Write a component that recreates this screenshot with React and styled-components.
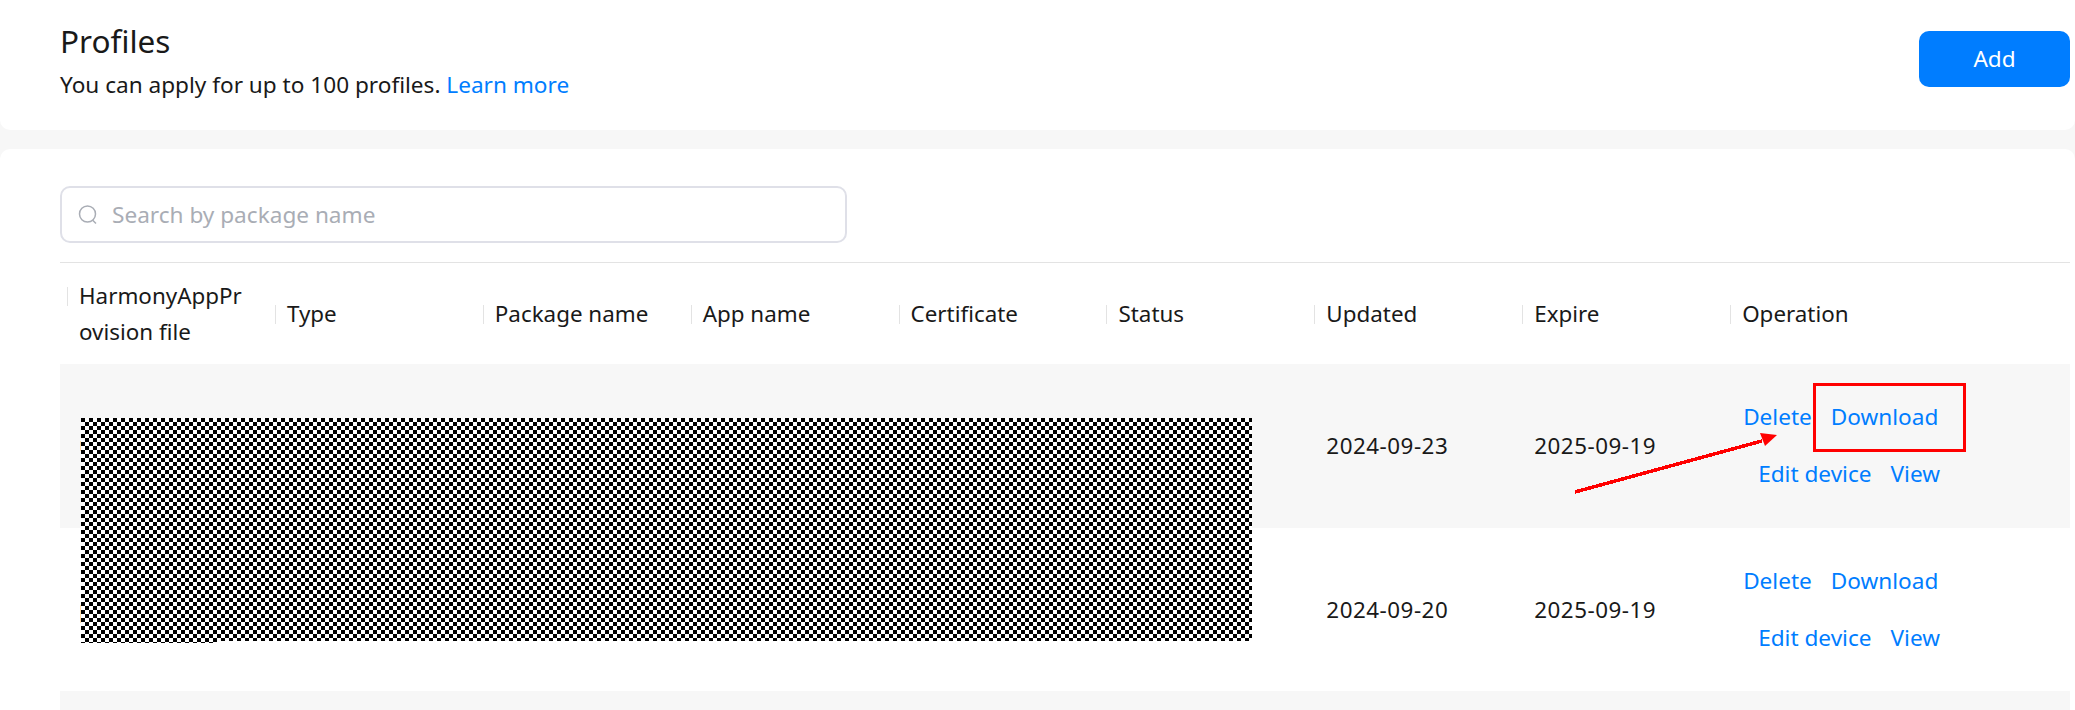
import React from 'react';
import styled, { createGlobalStyle } from 'styled-components';

const GlobalStyle = createGlobalStyle`
  html, body {
    margin: 0;
    padding: 0;
    background: #f7f7f7;
  }
  body {
    width: 2075px;
    height: 710px;
    overflow: hidden;
    font-family: "Noto Sans", "Liberation Sans", sans-serif;
    color: #191919;
  }
`;

const Page = styled.div`
  position: relative;
  width: 2075px;
  height: 710px;
  overflow: hidden;
`;

const HeaderCard = styled.header`
  height: 130px;
  box-sizing: border-box;
  padding: 0 5px 0 60px;
  background: #fff;
  border-radius: 0 0 10px 10px;
  display: flex;
  justify-content: space-between;
  align-items: flex-start;
`;

const Title = styled.h1`
  margin: 21px 0 0;
  font-size: 31.5px;
  line-height: 40px;
  font-weight: 400;
`;

const Subtitle = styled.p`
  margin: 6px 0 0;
  font-size: 22.6px;
  line-height: 36px;
`;

const Link = styled.a`
  color: #007dff;
  text-decoration: none;
`;

const AddButton = styled.button`
  width: 151px;
  height: 56px;
  margin-top: 31px;
  padding: 0 0 2px;
  border: none;
  border-radius: 10px;
  background: #007dff;
  color: #fff;
  font: inherit;
  font-size: 22.6px;
`;

const TableCard = styled.section`
  margin-top: 19px;
  height: 561px;
  padding: 37px 5px 0 60px;
  box-sizing: border-box;
  background: #fff;
  border-radius: 10px 10px 0 0;
`;

const SearchBox = styled.div`
  width: 787px;
  height: 57px;
  box-sizing: border-box;
  border: 2px solid #dfe0e8;
  border-radius: 10px;
  display: flex;
  align-items: center;
  gap: 14px;
  padding-left: 16px;
  color: #a9adb5;
  font-size: 22.6px;
`;

const Divider = styled.div`
  height: 1px;
  margin-top: 19px;
  background: #e3e3e3;
`;

const Grid = styled.div`
  display: grid;
  grid-template-columns: repeat(8, 207.9px) 1fr;
  align-items: center;
  height: ${(p) => p.$height}px;
  background: ${(p) => (p.$shade ? '#f7f7f7' : 'transparent')};
`;

const HeadCell = styled.div`
  position: relative;
  padding: 0 22px 0 19px;
  font-size: 22.4px;
  line-height: 36px;
  word-break: break-all;
  &::before {
    content: '';
    position: absolute;
    left: 7px;
    top: 9px;
    height: 19px;
    width: 1px;
    background: #e3e3e3;
  }
`;

const Cell = styled.div`
  padding-left: 19px;
  font-size: 22.4px;
  letter-spacing: 0.5px;
  grid-column: ${(p) => p.$col};
`;

const OpCell = styled.div`
  grid-column: 9;
  display: flex;
  flex-direction: column;
  gap: 21px;
  padding-left: 20px;
  font-size: 22.6px;
  line-height: 36px;
`;

const OpRow = styled.div`
  display: flex;
  gap: 19px;
  padding-left: ${(p) => p.$indent}px;
`;

const Tail = styled.div`
  height: 19px;
  background: #f7f7f7;
`;

// the reference has this part blacked out with a fine checker pattern,
// its lower right edge sits 2px higher than the left bit
const Redaction = styled.div`
  position: absolute;
  left: 81px;
  top: 418px;
  width: 1171px;
  height: 225px;
  background: repeating-conic-gradient(#000 0 25%, #fff 0 50%) 4px 0 / 8px 8px;
  clip-path: polygon(0 0, 100% 0, 100% 223px, 136px 223px, 136px 100%, 0 100%);
`;

// orange edge of the link text that sticks out left of the redaction
const LinkEdge = styled.div`
  position: absolute;
  left: 80px;
  top: ${(p) => p.$top}px;
  width: 1px;
  height: ${(p) => p.$height}px;
  background: #fcd9a6;
`;

const Annotations = styled.svg`
  position: absolute;
  inset: 0;
  pointer-events: none;
`;

const SearchIcon = () => (
  <svg width="20" height="20" viewBox="0 0 20 20" fill="none" stroke="#a9adb5" strokeWidth="1.5">
    <circle cx="9.5" cy="9" r="8" />
    <path d="M14.5 15 L18 18.5" />
  </svg>
);

const columns = ['HarmonyAppProvision file', 'Type', 'Package name', 'App name', 'Certificate', 'Status', 'Updated', 'Expire', 'Operation'];

const rows = [
  { updated: '2024-09-23', expire: '2025-09-19', shade: true },
  { updated: '2024-09-20', expire: '2025-09-19', shade: false },
];

export default function App() {
  return (
    <Page>
      <GlobalStyle />
      <HeaderCard>
        <div>
          <Title>Profiles</Title>
          <Subtitle>You can apply for up to 100 profiles. <Link>Learn more</Link></Subtitle>
        </div>
        <AddButton>Add</AddButton>
      </HeaderCard>
      <TableCard>
        <SearchBox>
          <SearchIcon />
          Search by package name
        </SearchBox>
        <Divider />
        <Grid $height={101}>
          {columns.map((c) => <HeadCell key={c}>{c}</HeadCell>)}
        </Grid>
        {rows.map((r) => (
          <Grid key={r.updated} $height={163.5} $shade={r.shade}>
            <Cell $col={7}>{r.updated}</Cell>
            <Cell $col={8}>{r.expire}</Cell>
            <OpCell>
              <OpRow $indent={0}><Link>Delete</Link><Link>Download</Link></OpRow>
              <OpRow $indent={15}><Link>Edit device</Link><Link>View</Link></OpRow>
            </OpCell>
          </Grid>
        ))}
        <Tail />
      </TableCard>
      <Redaction />
      <LinkEdge $top={441} $height={10} />
      <LinkEdge $top={605} $height={18} />
      <Annotations width="2075" height="710" viewBox="0 0 2075 710">
        <rect x="1814.5" y="384.5" width="150" height="66" fill="none" stroke="#ff0000" strokeWidth="3" />
        <path d="M1575 492 L1762 441" stroke="#ff0000" strokeWidth="3.5" fill="none" shapeRendering="crispEdges" />
        <path d="M1777 435 L1760 433 L1765 446 Z" fill="#ff0000" />
      </Annotations>
    </Page>
  );
}
